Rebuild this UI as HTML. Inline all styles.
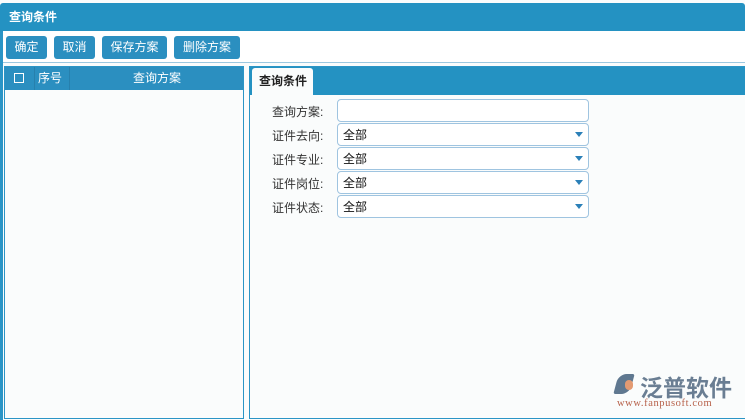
<!DOCTYPE html>
<html><head><meta charset="utf-8"><style>
*{box-sizing:border-box;margin:0;padding:0}
body{width:745px;height:420px;overflow:hidden;background:#fafcfc;font-family:"Liberation Sans","Noto Sans CJK SC",sans-serif;font-size:12px;position:relative}
.frame{position:absolute;left:0;top:0;width:3px;height:420px;background:#2b95c6}
.title{position:absolute;left:0;top:3px;width:745px;height:28px;background:#2492c2;color:#fff;font-weight:bold;font-size:12px;line-height:28px;padding-left:9px;border-radius:3px 3px 0 0}
.tb{position:absolute;top:31px;left:3px;width:742px;height:32px;background:#fff;border-bottom:1px solid #9cc8e0}
.btn{position:absolute;top:5px;height:23px;background:#2b8fc0;color:#fff;border-radius:3px;line-height:23px;text-align:center;font-size:12px}
.lp{position:absolute;left:4px;top:66px;width:240px;height:353px;border:1px solid #2b95c6;background:#fafcfc}
.lh{height:23px;background:#2b8fc0;color:#fff;position:relative;line-height:23px}
.rp{position:absolute;left:249px;top:66px;width:500px;height:353px;border:1px solid #2b95c6;border-right:none;background:#fafcfc}
.ts{height:28px;background:#2492c2;position:relative}
.tab{position:absolute;left:2px;top:1px;width:61px;height:28px;background:#fafcfc;border-radius:3px 3px 0 0;font-weight:bold;color:#222;line-height:26px;padding-left:7px}
.lbl{position:absolute;left:22px;width:80px;color:#333;font-size:12px}
.in{position:absolute;left:87px;width:252px;height:23px;border:1px solid #9fc4e0;border-radius:4px;background:#fff;line-height:23px;padding-left:5px;color:#111}
.in .ar{position:absolute;right:5px;top:8px;width:0;height:0;border-left:4px solid transparent;border-right:4px solid transparent;border-top:5px solid #2b80b8}
</style></head><body>
<div class="title">查询条件</div>
<div class="frame" style="top:31px;height:389px"></div>
<div class="tb">
<div class="btn" style="left:3px;width:41px">确定</div>
<div class="btn" style="left:51px;width:41px">取消</div>
<div class="btn" style="left:99px;width:65px">保存方案</div>
<div class="btn" style="left:171px;width:66px">删除方案</div>
</div>
<div class="lp"><div class="lh">
<span style="position:absolute;left:9px;top:6px;width:10px;height:10px;border:1.5px solid #fff"></span>
<span style="position:absolute;left:29px;top:0;height:23px;border-left:1px solid #2780ad"></span>
<span style="position:absolute;left:33px">序号</span>
<span style="position:absolute;left:64px;top:0;height:23px;border-left:1px solid #2780ad"></span>
<span style="position:absolute;left:128px">查询方案</span>
</div></div>
<div class="rp"><div class="ts"><div class="tab">查询条件</div></div>
<div class="lbl" style="top:36px">查询方案:</div><div class="in" style="top:32px"></div>
<div class="lbl" style="top:60px">证件去向:</div><div class="in" style="top:56px">全部<span class="ar"></span></div>
<div class="lbl" style="top:84px">证件专业:</div><div class="in" style="top:80px">全部<span class="ar"></span></div>
<div class="lbl" style="top:108px">证件岗位:</div><div class="in" style="top:104px">全部<span class="ar"></span></div>
<div class="lbl" style="top:132px">证件状态:</div><div class="in" style="top:128px">全部<span class="ar"></span></div>
</div>
<div style="position:absolute;left:616px;top:374px;width:16px;height:20px;background:#5f7890;border-radius:8px 2px 8px 2px;transform:skewX(-15deg)"></div>
<div style="position:absolute;left:625px;top:380px;width:8px;height:10px;background:#e39a72;border-radius:4px"></div>
<div style="position:absolute;left:640px;top:369px;font-size:23px;font-weight:bold;color:#6a7e93;letter-spacing:0px">泛普软件</div>
<div style="position:absolute;left:617px;top:398px;font-size:10.5px;color:#b7614a;font-family:'Liberation Serif',serif;letter-spacing:0.6px">www.fanpusoft.com</div>
</body></html>
